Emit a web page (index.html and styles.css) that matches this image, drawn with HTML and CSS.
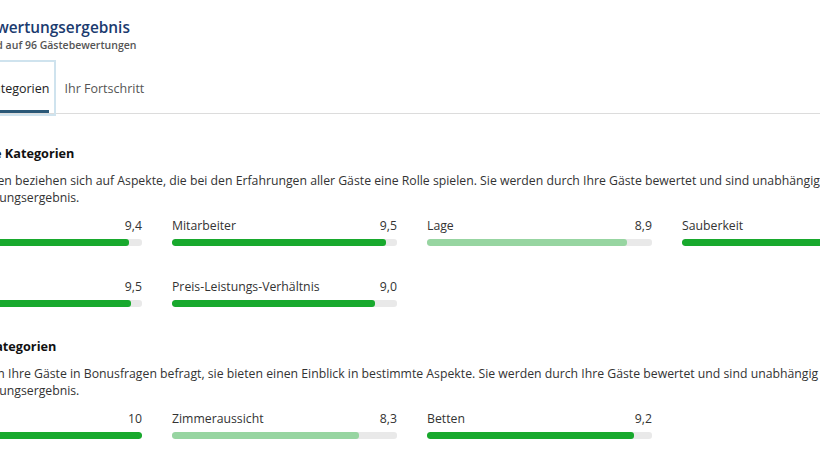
FILE: index.html
```html
<!DOCTYPE html>
<html lang="de">
<head>
	<meta charset="UTF-8">
	<title>Bewertungsergebnis</title>
	<link rel="stylesheet" href="styles.css">
</head>
<body>
	<div class="page">
		<div class="head">
			<h1>Ihr Bewertungsergebnis</h1>
			<p>Basierend auf 96 Gästebewertungen</p>
		</div>

		<div class="tabs">
			<a><span>Übersicht</span></a>
			<a class="cur"><span>Kategorien</span></a>
			<a><span>Ihr Fortschritt</span></a>
		</div>

		<div class="group">
			<h2>Grundlegende Kategorien</h2>
			<p class="desc">Diese Kategorien beziehen sich auf Aspekte, die bei den Erfahrungen aller Gäste eine Rolle spielen. Sie werden durch Ihre Gäste bewertet und sind unabhängig von Ihrem Gesamtbewertungsergebnis.</p>
			<div class="scores">
				<div class="score">
					<div class="top"><span>Ausstattung</span><span>9,4</span></div>
					<div class="track"><i style="width: 94%"></i></div>
				</div>
				<div class="score">
					<div class="top"><span>Mitarbeiter</span><span>9,5</span></div>
					<div class="track"><i style="width: 95%"></i></div>
				</div>
				<div class="score">
					<div class="top"><span>Lage</span><span>8,9</span></div>
					<div class="track"><i class="low" style="width: 89%"></i></div>
				</div>
				<div class="score">
					<div class="top"><span>Sauberkeit</span><span>9,6</span></div>
					<div class="track"><i style="width: 96%"></i></div>
				</div>
				<div class="score">
					<div class="top"><span>Komfort</span><span>9,5</span></div>
					<div class="track"><i style="width: 95%"></i></div>
				</div>
				<div class="score">
					<div class="top"><span>Preis-Leistungs-Verhältnis</span><span>9,0</span></div>
					<div class="track"><i style="width: 90%"></i></div>
				</div>
			</div>
		</div>

		<div class="group">
			<h2>Zusätzliche Kategorien</h2>
			<p class="desc">Danach werden Ihre Gäste in Bonusfragen befragt, sie bieten einen Einblick in bestimmte Aspekte. Sie werden durch Ihre Gäste bewertet und sind unabhängig von Ihrem Gesamtbewertungsergebnis.</p>
			<div class="scores">
				<div class="score">
					<div class="top"><span>Frühstück</span><span>10</span></div>
					<div class="track"><i style="width: 100%"></i></div>
				</div>
				<div class="score">
					<div class="top"><span>Zimmeraussicht</span><span>8,3</span></div>
					<div class="track"><i class="low" style="width: 83%"></i></div>
				</div>
				<div class="score">
					<div class="top"><span>Betten</span><span>9,2</span></div>
					<div class="track"><i style="width: 92%"></i></div>
				</div>
			</div>
		</div>
	</div>
</body>
</html>
```

FILE: styles.css
```css
*{
	margin: 0;
	padding: 0;
	box-sizing: border-box;
}
html, body{
	overflow: hidden;
	background: #fff;
}
body{
	font-family: "Open Sans", "Noto Sans", sans-serif;
	color: #333;
}
.page{
	width: 1100px;
	margin-left: -83px;
	padding-top: 18px;
}
.head{
	padding-left: 35px;
}
.head h1{
	font-size: 15.4px;
	line-height: 20px;
	font-weight: 600;
	color: #1b3b6f;
}
.head p{
	font-size: 10.5px;
	line-height: 14px;
	font-weight: 600;
	color: #555;
}
.tabs{
	display: flex;
	gap: 7px;
	height: 51px;
	margin: 11px -200px 0 -6px;
	border-bottom: 1px solid #dcdcdc;
}
.tabs a{
	display: flex;
	padding: 0 4px;
	font-size: 12.5px;
	color: #555;
	cursor: pointer;
}
.tabs a span{
	display: flex;
	align-items: center;
	padding-top: 3px;
	border-bottom: 3px solid transparent;
}
.tabs a.cur{
	color: #222;
	outline: 2px solid #cfe3ee;
	outline-offset: 1px;
}
.tabs a.cur span{
	border-bottom-color: #2a5877;
}
.group{
	padding-top: 30px;
}
.group h2{
	margin-left: -5px;
	font-size: 12.7px;
	line-height: 18px;
	font-weight: 700;
	color: #111;
}
.desc{
	margin-top: 10px;
	margin-left: -2px;
	font-size: 12.25px;
	line-height: 17px;
	color: #333;
}
.scores{
	display: grid;
	grid-template-columns: repeat(4, 225px);
	column-gap: 30px;
	row-gap: 32px;
	margin-top: 11px;
}
.score .top{
	display: flex;
	justify-content: space-between;
	font-size: 12.25px;
	line-height: 18px;
	color: #333;
}
.track{
	height: 7px;
	margin-top: 4px;
	background: #e9e9e9;
	border-radius: 3px;
	overflow: hidden;
}
.track i{
	display: block;
	height: 100%;
	background: #18a92d;
	border-radius: 3px;
}
.track i.low{
	background: #97d5a1;
}
```
